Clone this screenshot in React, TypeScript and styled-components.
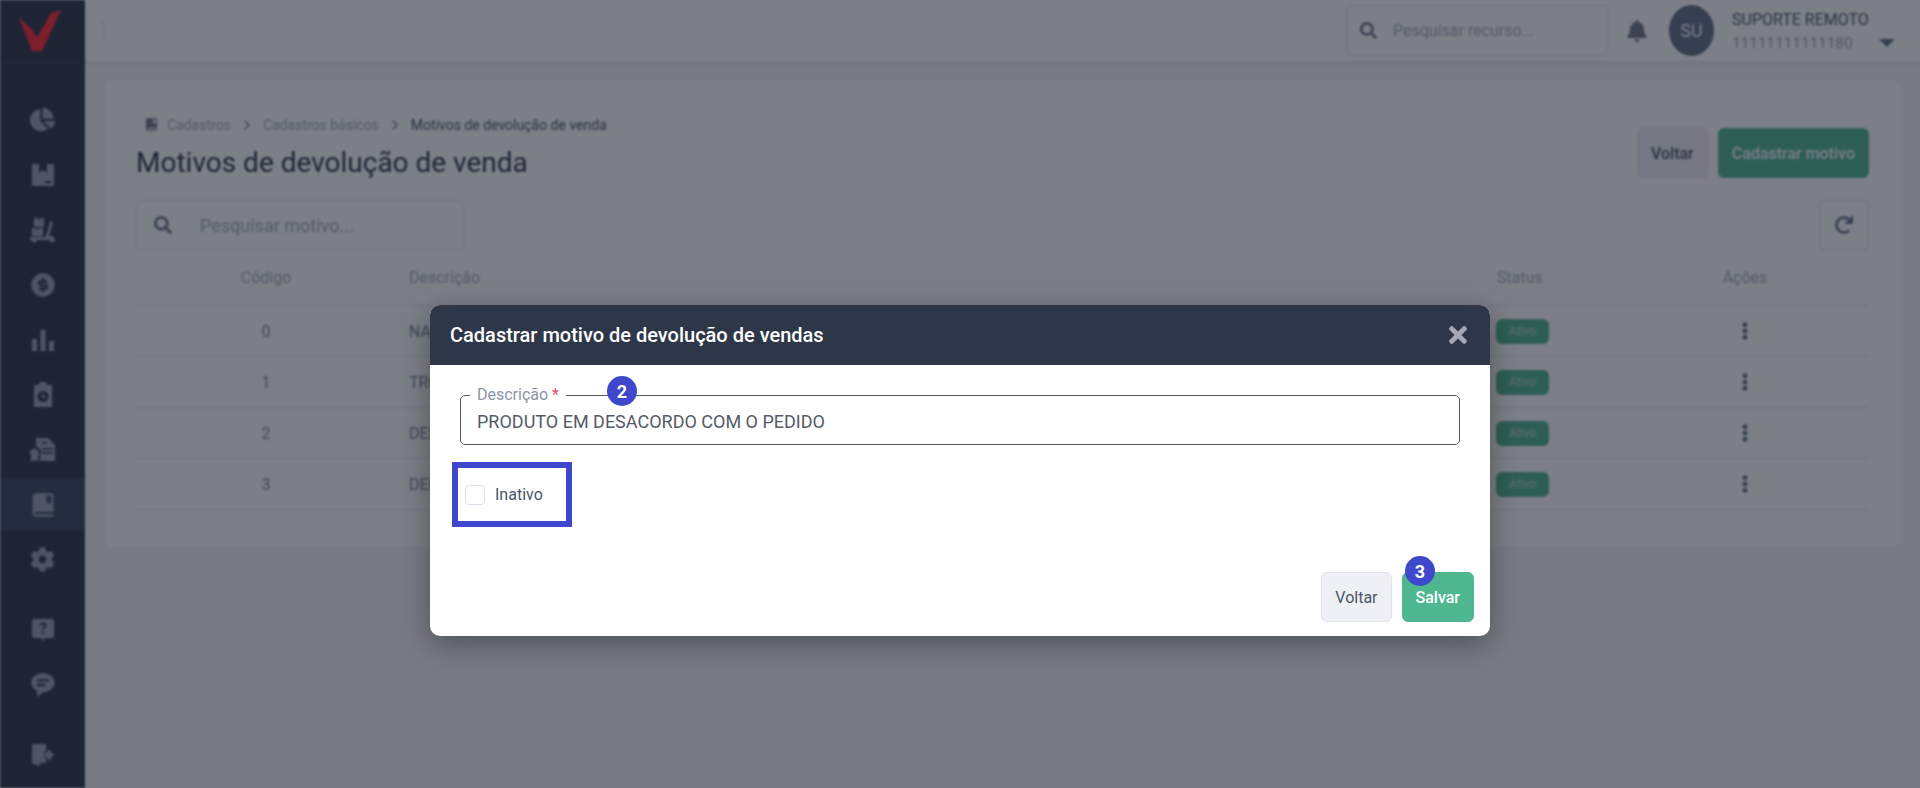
import React from 'react';
import styled, { createGlobalStyle } from 'styled-components';
import { FaBell, FaChartPie, FaCog, FaEllipsisV, FaRedo, FaSearch, FaTimes } from 'react-icons/fa';
import { FiChevronRight } from 'react-icons/fi';
import { BiSolidBookBookmark, BiSolidMessageRoundedDetail } from 'react-icons/bi';
import { RiMoneyDollarCircleFill } from 'react-icons/ri';

const GlobalStyle = createGlobalStyle`
  html, body {
    margin: 0;
    height: 100%;
    overflow: hidden;
    background: #f4f5f9;
    font-family: Roboto, "Liberation Sans", sans-serif;
  }
  * { box-sizing: border-box; }
`;

const Screen = styled.div`
  position: relative;
  width: 1920px;
  height: 788px;
  overflow: hidden;
`;

const Page = styled.div`
  display: flex;
  height: 100%;
  filter: blur(1px);
`;

const Sidebar = styled.aside`
  width: 85px;
  flex: none;
  display: flex;
  flex-direction: column;
  background: #2d3748;
  color: #97a3b3;
`;

const LogoBox = styled.div`
  height: 62px;
  display: flex;
  align-items: center;
  justify-content: center;
  border-bottom: 1px solid #3d4757;
  padding-right: 5px;
`;

const MenuList = styled.nav`
  display: flex;
  flex-direction: column;
  padding-top: 31px;
  flex: 1;
`;

const MenuItem = styled.div<{ $active?: boolean; $gap?: number }>`
  height: 53px;
  margin-bottom: 2px;
  margin-top: ${(p) => p.$gap || 0}px;
  display: flex;
  align-items: center;
  justify-content: center;
  background: ${(p) => (p.$active ? '#3a4a5c' : 'transparent')};
  font-size: 25px;
`;

const Main = styled.main`
  flex: 1;
  display: flex;
  flex-direction: column;
  min-width: 0;
`;

const TopBar = styled.header`
  height: 62px;
  flex: none;
  display: flex;
  align-items: center;
  background: #ffffff;
  border-bottom: 1px solid #e4e6ec;
  box-shadow: 0 2px 6px rgba(0, 0, 0, 0.06);
  padding: 0 25px 0 18px;
`;

const TopDivider = styled.div`
  width: 1px;
  height: 20px;
  background: #d9dbe2;
`;

const TopSearch = styled.div`
  margin-left: auto;
  width: 262px;
  height: 51px;
  display: flex;
  align-items: center;
  gap: 16px;
  padding-left: 13px;
  border: 1px solid #dfe2e8;
  border-radius: 5px;
  font-size: 16px;
  color: #a3abb8;
  svg { color: #6e7886; font-size: 17px; }
`;

const Bell = styled.div`
  margin-left: 18px;
  display: flex;
  color: #6e7886;
  font-size: 22px;
`;

const Avatar = styled.div`
  margin-left: 21px;
  width: 45px;
  height: 51px;
  border-radius: 50%;
  display: flex;
  align-items: center;
  justify-content: center;
  background: #5f7186;
  color: #ffffff;
  font-size: 18px;
`;

const UserBox = styled.div`
  margin-left: 18px;
  width: 163px;
  display: flex;
  flex-direction: column;
  gap: 4px;
`;

const UserName = styled.div`
  font-size: 16px;
  line-height: 20px;
  color: #4a5568;
`;

const UserRow = styled.div`
  display: flex;
  align-items: center;
  justify-content: space-between;
  font-size: 15px;
  line-height: 18px;
  letter-spacing: 0.2px;
  color: #9aa3b0;
`;

const Caret = styled.span`
  width: 0;
  height: 0;
  border-left: 8px solid transparent;
  border-right: 8px solid transparent;
  border-top: 8px solid #5f7186;
`;

const Content = styled.div`
  padding: 17px 19px 0;
`;

const Card = styled.section`
  height: 469px;
  padding: 36px 31px 0;
  background: #ffffff;
  border: 1px solid #eef0f4;
  border-radius: 8px;
`;

const CardHead = styled.div`
  display: flex;
  justify-content: space-between;
`;

const Breadcrumb = styled.div`
  height: 17px;
  display: flex;
  align-items: center;
  padding-left: 8px;
  gap: 8px;
  font-size: 14px;
  color: #a3abb8;
  svg { color: #6e7886; }
`;

const CrumbCurrent = styled.span`
  color: #4a5568;
`;

const Title = styled.h1`
  margin: 12px 0 0;
  font-size: 28px;
  line-height: 36px;
  font-weight: 400;
  color: #2d3748;
`;

const HeadButtons = styled.div`
  display: flex;
  gap: 10px;
  margin-top: 12px;
`;

const Button = styled.button<{ $primary?: boolean; $bold?: boolean }>`
  height: 50px;
  padding: 0 13px;
  border: 1px solid ${(p) => (p.$primary ? '#4fb78f' : '#e2e3e8')};
  border-radius: 6px;
  background: ${(p) => (p.$primary ? '#4fb78f' : '#eef0f5')};
  color: ${(p) => (p.$primary ? '#ffffff' : '#4a5568')};
  font-family: inherit;
  font-size: 16px;
  font-weight: ${(p) => (p.$bold ? 500 : 400)};
`;

const Filters = styled.div`
  margin-top: 19px;
  display: flex;
  justify-content: space-between;
`;

const TableSearch = styled.div`
  width: 328px;
  height: 50px;
  display: flex;
  align-items: center;
  gap: 28px;
  padding-left: 17px;
  border: 1px solid #e2e4ea;
  border-radius: 5px;
  font-size: 18px;
  color: #a3abb8;
  svg { color: #6e7886; font-size: 18px; }
`;

const RefreshButton = styled.div`
  width: 50px;
  height: 50px;
  display: flex;
  align-items: center;
  justify-content: center;
  border: 1px solid #e2e4ea;
  border-radius: 5px;
  color: #5f7186;
  font-size: 18px;
`;

const Row = styled.div<{ $head?: boolean }>`
  display: grid;
  grid-template-columns: 260px 1fr 137px 248px;
  align-items: center;
  height: ${(p) => (p.$head ? 56 : 51)}px;
  font-size: 16px;
  color: ${(p) => (p.$head ? '#a3abb8' : '#718096')};
  border-bottom: 1px solid #e6e8ee;
`;

const CodeCell = styled.div`
  text-align: center;
`;

const TextCell = styled.div`
  padding-left: 13px;
`;

const ActionCell = styled.div`
  display: flex;
  justify-content: center;
  color: #5f7186;
  font-size: 18px;
`;

const StatusBadge = styled.span`
  display: inline-flex;
  align-items: center;
  justify-content: center;
  width: 53px;
  height: 25px;
  margin-left: 12px;
  border-radius: 6px;
  background: #4fb78f;
  color: #c8d8d0;
  font-size: 12px;
`;

const Overlay = styled.div`
  position: absolute;
  inset: 0;
  display: flex;
  justify-content: center;
  align-items: flex-start;
  padding-top: 305px;
  background: rgba(18, 22, 36, 0.55);
`;

const Modal = styled.div`
  position: relative;
  width: 1060px;
  height: 331px;
  display: flex;
  flex-direction: column;
  border-radius: 10px;
  overflow: visible;
  background: #ffffff;
  box-shadow: 0 8px 30px rgba(0, 0, 0, 0.35);
`;

const ModalHead = styled.div`
  height: 60px;
  flex: none;
  display: flex;
  align-items: center;
  justify-content: space-between;
  padding: 0 19px 0 20px;
  border-radius: 10px 10px 0 0;
  background: #2d3748;
`;

const ModalTitle = styled.h2`
  margin: 0;
  font-size: 20px;
  font-weight: 500;
  color: #ffffff;
`;

const CloseButton = styled.div`
  display: flex;
  color: #a3a8b4;
  font-size: 26px;
`;

const ModalBody = styled.div`
  flex: 1;
  padding: 22px 30px 0;
`;

const Field = styled.fieldset`
  margin: 0;
  height: 58px;
  padding: 0 16px;
  border: 1px solid #555b66;
  border-radius: 5px;
`;

const FieldLegend = styled.legend`
  margin-left: -7px;
  padding: 0 7px 0 7px;
  font-size: 16px;
  line-height: 16px;
  color: #8a94a8;
`;

const Required = styled.span`
  color: #f04a5a;
`;

const FieldInput = styled.input`
  width: 100%;
  height: 41px;
  padding: 0 0 4px;
  border: none;
  outline: none;
  background: transparent;
  font-family: inherit;
  font-size: 18px;
  color: #555b66;
`;

const HighlightBox = styled.label`
  margin: 17px 0 0 -8px;
  width: 120px;
  height: 65px;
  display: flex;
  align-items: center;
  gap: 10px;
  padding-left: 7px;
  border: 6px solid #3f48cc;
  font-size: 16px;
  color: #4a5568;
`;

const CheckBox = styled.span`
  width: 20px;
  height: 20px;
  border: 1px solid #dfe0ee;
  border-radius: 4px;
`;

const ModalFooter = styled.div`
  display: flex;
  justify-content: flex-end;
  gap: 10px;
  padding: 0 16px 14px;
`;

const StepBadge = styled.span<{ $left: number; $top: number }>`
  position: absolute;
  left: ${(p) => p.$left}px;
  top: ${(p) => p.$top}px;
  width: 30px;
  height: 30px;
  display: flex;
  align-items: center;
  justify-content: center;
  border-radius: 50%;
  background: #3f48cc;
  color: #ffffff;
  font-size: 18px;
  font-weight: 700;
`;

const Logo = () => (
  <svg width="44" height="44" viewBox="0 0 44 44">
    <path d="M43 1 L24 42 L14 42 L1 9 L12 18 L19 28 L33 4 Z" fill="#ff2a35" />
  </svg>
);

const BoxIcon = () => (
  <svg width="24" height="24" viewBox="0 0 24 24" fill="currentColor">
    <path d="M1 1h7v9l4-3 4 3V1h7v22H1zM14 18v2h6v-2z" fillRule="evenodd" />
  </svg>
);

const DollyIcon = () => (
  <svg width="26" height="26" viewBox="0 0 26 26" fill="currentColor">
    <path d="M4 1h4v2h2V1h4v9H4zM2 11h4v2h2v-2h5v8H2z" />
    <path d="M0 20h15c2-3 3-8 5-13l-1-2 2-1 2 2-4 13c3-1 6 1 6 4s-5 3-6 0H7a2.5 2.5 0 0 1-5 0H0z" />
  </svg>
);

const BarsIcon = () => (
  <svg width="24" height="24" viewBox="0 0 24 24" fill="currentColor">
    <path d="M1 11h5v12H1zM9.500 2h5v21h-5zM18 13h5v10h-5z" />
  </svg>
);

const ClipboardIcon = () => (
  <svg width="24" height="26" viewBox="0 0 24 26" fill="currentColor">
    <path
      d="M3 3h5a4 4 0 0 1 8 0h5v22H3zM12 9a5.500 5.500 0 1 0 0 11 5.500 5.500 0 0 0 0-11zM11 11h1.500v3.500H15V16h-4z"
      fillRule="evenodd"
    />
  </svg>
);

const CertificateIcon = () => (
  <svg width="26" height="26" viewBox="0 0 26 26" fill="currentColor">
    <path
      d="M6 1h12l7 7v16H10v-6a5 5 0 0 0-4-8zM12 11v1.500h11V11zM12 15v1.500h11V15zM12 5v1.500h5V5z"
      fillRule="evenodd"
    />
    <path d="M5 12a4 4 0 0 1 3 6.500V25l-3-2-4 2v-6.500A4 4 0 0 1 5 12z" />
  </svg>
);

const HelpIcon = () => (
  <svg width="24" height="24" viewBox="0 0 24 24" fill="currentColor">
    <path
      d="M3 1h18a2 2 0 0 1 2 2v15a2 2 0 0 1-2 2h-7l-2 3-2-3H3a2 2 0 0 1-2-2V3a2 2 0 0 1 2-2zM12 4.500c-2 0-3.500 1-3.500 3h2c0-.8.7-1.300 1.500-1.300s1.500.5 1.500 1.200c0 1.400-2.500 1.500-2.500 4.100h2c0-1.800 2.700-2.200 2.700-4.300 0-1.900-1.700-3-3.700-3zM11 13.500v2.500h2v-2.500z"
      fillRule="evenodd"
    />
  </svg>
);

const ExitIcon = () => (
  <svg width="24" height="24" viewBox="0 0 24 24" fill="currentColor">
    <path d="M1 2c0-1 .5-1 1-1h13v8h-2v2h2v2h-2v2h2v5H9v3l-7-2c-.5 0-1-.5-1-1zM15 9h2V6l6 6-6 6v-3h-2v-2h-2v-2h2z" />
  </svg>
);

const menuTop = [
  <FaChartPie key="pie" />,
  <BoxIcon key="box" />,
  <DollyIcon key="dolly" />,
  <RiMoneyDollarCircleFill key="money" style={{ fontSize: 28 }} />,
  <BarsIcon key="bars" />,
  <ClipboardIcon key="clip" />,
  <CertificateIcon key="cert" />,
];

const motivos = [
  { id: 0, nome: 'NAO SE APLICA' },
  { id: 1, nome: 'TROCA' },
  { id: 2, nome: 'DESISTENCIA' },
  { id: 3, nome: 'DEFEITO' },
];

const App = () => {
  return (
    <Screen>
      <GlobalStyle />
      <Page>
        <Sidebar>
          <LogoBox>
            <Logo />
          </LogoBox>
          <MenuList>
            {menuTop.map((icon, i) => (
              <MenuItem key={i}>{icon}</MenuItem>
            ))}
            <MenuItem $active>
              <BiSolidBookBookmark style={{ fontSize: 28 }} />
            </MenuItem>
            <MenuItem>
              <FaCog />
            </MenuItem>
            <MenuItem $gap={15}>
              <HelpIcon />
            </MenuItem>
            <MenuItem>
              <BiSolidMessageRoundedDetail style={{ fontSize: 28 }} />
            </MenuItem>
            <MenuItem $gap={15}>
              <ExitIcon />
            </MenuItem>
          </MenuList>
        </Sidebar>
        <Main>
          <TopBar>
            <TopDivider />
            <TopSearch>
              <FaSearch />
              Pesquisar recurso...
            </TopSearch>
            <Bell>
              <FaBell />
            </Bell>
            <Avatar>SU</Avatar>
            <UserBox>
              <UserName>SUPORTE REMOTO</UserName>
              <UserRow>
                11111111111180
                <Caret />
              </UserRow>
            </UserBox>
          </TopBar>
          <Content>
            <Card>
              <CardHead>
                <div>
                  <Breadcrumb>
                    <BiSolidBookBookmark size={15} />
                    Cadastros
                    <FiChevronRight size={16} />
                    Cadastros básicos
                    <FiChevronRight size={16} />
                    <CrumbCurrent>Motivos de devolução de venda</CrumbCurrent>
                  </Breadcrumb>
                  <Title>Motivos de devolução de venda</Title>
                </div>
                <HeadButtons>
                  <Button $bold>Voltar</Button>
                  <Button $primary $bold>
                    Cadastrar motivo
                  </Button>
                </HeadButtons>
              </CardHead>
              <Filters>
                <TableSearch>
                  <FaSearch />
                  Pesquisar motivo...
                </TableSearch>
                <RefreshButton>
                  <FaRedo />
                </RefreshButton>
              </Filters>
              <Row $head>
                <CodeCell>Código</CodeCell>
                <TextCell>Descrição</TextCell>
                <TextCell>Status</TextCell>
                <CodeCell>Ações</CodeCell>
              </Row>
              {motivos.map((m) => (
                <Row key={m.id}>
                  <CodeCell>{m.id}</CodeCell>
                  <TextCell>{m.nome}</TextCell>
                  <div>
                    <StatusBadge>Ativo</StatusBadge>
                  </div>
                  <ActionCell>
                    <FaEllipsisV />
                  </ActionCell>
                </Row>
              ))}
            </Card>
          </Content>
        </Main>
      </Page>
      <Overlay>
        <Modal>
          <ModalHead>
            <ModalTitle>Cadastrar motivo de devolução de vendas</ModalTitle>
            <CloseButton>
              <FaTimes />
            </CloseButton>
          </ModalHead>
          <ModalBody>
            <Field>
              <FieldLegend>
                Descrição <Required>*</Required>
              </FieldLegend>
              <FieldInput readOnly value="PRODUTO EM DESACORDO COM O PEDIDO" />
            </Field>
            <HighlightBox>
              <CheckBox />
              Inativo
            </HighlightBox>
          </ModalBody>
          <ModalFooter>
            <Button>Voltar</Button>
            <Button $primary $bold>
              Salvar
            </Button>
          </ModalFooter>
          <StepBadge $left={177} $top={71}>2</StepBadge>
          <StepBadge $left={975} $top={251}>3</StepBadge>
        </Modal>
      </Overlay>
    </Screen>
  );
};

export default App;
